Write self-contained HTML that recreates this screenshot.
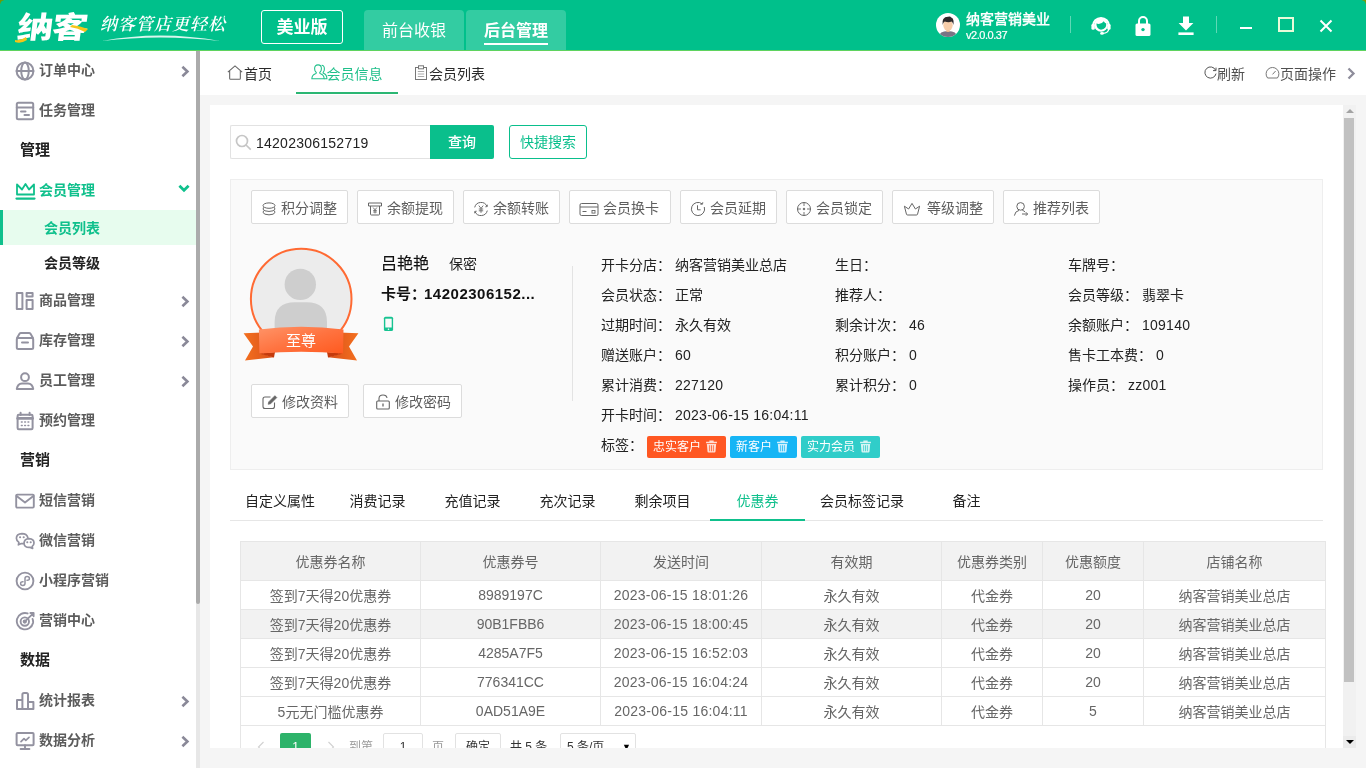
<!DOCTYPE html>
<html lang="zh-CN">
<head>
<meta charset="utf-8">
<title>纳客 会员信息</title>
<style>
*{box-sizing:border-box;margin:0;padding:0}
html,body{width:1366px;height:768px;overflow:hidden;background:#f0f0f0;font-family:"Liberation Sans","Noto Sans CJK SC",sans-serif;font-size:14px;color:#333}
.abs{position:absolute}
#hdr{position:absolute;left:0;top:0;width:1366px;height:50px;background:#00c08b}
#hdrline{position:absolute;left:0;top:50px;width:1366px;height:1px;background:#5fd35f}
#side{position:absolute;left:0;top:51px;width:196px;height:717px;background:#fff}
#sidesb{position:absolute;left:196px;top:51px;width:4px;height:717px;background:#e7e7e7}
#sidesb i{position:absolute;left:0;top:0;width:4px;height:553px;background:#ababab;border-radius:0 0 2px 2px}
#tabs{position:absolute;left:200px;top:51px;width:1166px;height:44px;background:#fff}
#mainbg{position:absolute;left:200px;top:95px;width:1166px;height:673px;background:#f5f5f5}
#panel{position:absolute;background:#fff;overflow:hidden}
#foot{position:absolute;left:200px;top:746px;width:1166px;height:22px;background:#f0f0f0}

/* header */
#logo{position:absolute;left:15px;top:8px;font:normal 900 30px/40px "Liberation Sans","Noto Sans CJK SC",sans-serif;color:#fff;letter-spacing:-1px;transform:skewX(-7deg) scaleX(1.2);transform-origin:left bottom;white-space:nowrap}
#slogan{position:absolute;left:100px;top:14px;font:italic 600 17px/22px "Liberation Serif","Noto Serif CJK SC",serif;color:#fff;letter-spacing:1px;white-space:nowrap}
#ver{position:absolute;left:261px;top:10px;width:82px;height:34px;border:1px solid #fff;border-radius:3px;color:#fff;font-weight:700;font-size:17px;line-height:33px;text-align:center}
.htab{position:absolute;top:10px;height:40px;background:#33cca2;border-radius:4px 4px 0 0;color:#fff;font-size:16px;line-height:42px;text-align:center}
#uname{position:absolute;left:966px;top:9px;color:#fff;font-size:14px;line-height:20px;font-weight:500;white-space:nowrap;-webkit-text-stroke:.25px #fff}
#uver{position:absolute;left:966px;top:28px;color:#fff;font-size:11px;line-height:14px;white-space:nowrap;letter-spacing:-0.45px;-webkit-text-stroke:.2px #fff}
.hsep{position:absolute;top:16px;width:1px;height:17px;background:#5fd8b6}

/* sidebar */
.mi{position:absolute;left:0;width:196px;height:40px}
.mi svg.ic{position:absolute;left:15px;top:11px}
.mi .t{position:absolute;left:39px;top:10px;font-size:14px;line-height:20px;font-weight:700;color:#5c5c5c;white-space:nowrap}
.mi svg.ch{position:absolute;left:179px;top:14px}
.mg{position:absolute;left:20px;font-size:15px;line-height:20px;font-weight:700;color:#222}
.sub{position:absolute;left:0;width:196px;height:35px}
.sub .t{position:absolute;left:44px;top:8px;font-size:14px;line-height:20px;font-weight:700;color:#222}
#sidein{position:absolute;left:0;width:196px}

/* top tabs */
.tt{position:absolute;top:0;height:44px;line-height:46px;font-size:14px;color:#2a2a2a;white-space:nowrap}
.tt svg{position:absolute;top:14px}

/* panel */
#panel{left:210px;top:105px;width:1146px;height:643px}
#vsb{position:absolute;left:1133px;top:0;width:13px;height:643px;background:#f1f1f1}
#vsb i{position:absolute;left:1px;top:13px;width:10px;height:564px;background:#c1c1c1}
#vsb .up{position:absolute;left:3px;top:4px;width:0;height:0;border:4px solid transparent;border-top:0;border-bottom:4px solid #a3a3a3}
#vsb .dn{position:absolute;left:3px;top:635px;width:0;height:0;border:4px solid transparent;border-bottom:0;border-top:4px solid #000}
#vsb .dnb{position:absolute;left:0;top:631px;width:13px;height:12px;background:#ebebeb}
#sinput{position:absolute;left:20px;top:20px;width:200px;height:34px;border:1px solid #e2e2e2;border-right:0;background:#fff;border-radius:2px 0 0 2px}
#sinput span{position:absolute;left:25px;top:6.500px;font-size:14px;line-height:20px;color:#222}
#sbtn{position:absolute;left:220px;top:20px;width:64px;height:34px;background:#0abf8c;color:#fff;font-size:14px;font-weight:500;line-height:35px;text-align:center;border-radius:0 2px 2px 0}
#qbtn{position:absolute;left:299px;top:20px;width:78px;height:34px;border:1px solid #0abf8c;color:#0abf8c;font-size:14px;line-height:33px;text-align:center;border-radius:3px;background:#fff}
#card{position:absolute;left:20px;top:74px;width:1093px;height:291px;background:#fafafa;border:1px solid #eee}
.ab{position:absolute;top:9px;height:34px;border:1px solid #dcdcdc;border-radius:2px;background:#fff;color:#5e5e5e;font-size:14px;line-height:34px;white-space:nowrap;padding-left:29px}
.ab svg{position:absolute;left:9px;top:9.5px}

/* card content (coordinates relative to #card, whose origin = page (231,181)) */
.lb{position:absolute;font-size:14px;line-height:20px;color:#222;white-space:nowrap}
.lb b{font-weight:400;margin-left:4px}
.eb{position:absolute;top:203px;height:34px;border:1px solid #dcdcdc;border-radius:2px;background:#fff;color:#5e5e5e;font-size:14px;line-height:35px;white-space:nowrap;padding-left:30px}
.eb svg{position:absolute;left:9px;top:8px}
.tag{position:absolute;top:255px;height:22px;border-radius:2px;color:#fff;font-size:12px;line-height:22px;padding-left:6px;white-space:nowrap}
.tag svg{position:absolute;top:5px}

/* lower tabs + table (coords relative to #panel origin (210,105)) */
#ltabs{position:absolute;left:20px;top:376px;width:1093px;height:40px;border-bottom:1px solid #e6e6e6}
#ltabs div{position:absolute;top:0;height:40px;line-height:40px;font-size:14px;color:#222;text-align:center;white-space:nowrap}
#ltabs div.on{color:#0fc08c;border-bottom:2px solid #0fc08c;height:40px}
#tbl{position:absolute;left:30px;top:436px;border-collapse:collapse;table-layout:fixed;width:1085px}
#tbl th,#tbl td{border:1px solid #e6e6e6;text-align:center;font-size:14px;font-weight:400;color:#666;padding:0;white-space:nowrap;overflow:hidden}
#tbl th{height:39px;background:#f2f2f2}
#tbl td{height:29px}
#tbl tr.hv td{background:#f2f2f2}
#pgwrap{position:absolute;left:30px;top:620px;width:1086px;height:40px;border-left:1px solid #e6e6e6;border-right:1px solid #e6e6e6}
.pg{position:absolute;top:8px;height:28px;line-height:28px;font-size:12px;color:#333;white-space:nowrap}
.n{letter-spacing:.25px}
#tbl td:nth-child(3){letter-spacing:.25px}
#hdr,#sidein,#tabs,#panel{will-change:transform}
</style>
</head>
<body>
<div id="hdr">
<div class="abs" style="left:0;top:0;width:4px;height:4px;background:radial-gradient(circle at 4px 4px,#00c08b 3.200px,#6f9a06 4px)"></div>
<div class="abs" style="left:1362px;top:0;width:4px;height:4px;background:radial-gradient(circle at 0 4px,#00c08b 3.200px,#7a9a08 4px)"></div>
<div id="logo">纳客</div>
<svg class="abs" style="left:14px;top:10px" width="80" height="36" viewBox="0 0 80 36"><path d="M1 30 q6 1 11 -3 l1 3 q-6 4 -12 2z" fill="#f5c518"/><path d="M56 17 q8 1 15 5 l3 -3 q-8 -3 -16 -4z" fill="#f5c518"/></svg>
<div id="slogan">纳客管店更轻松</div>
<svg class="abs" style="left:100px;top:33px" width="126" height="10" viewBox="0 0 126 10"><path d="M2 8 Q60 -3 120 8 Q60 1 2 8z" fill="#fff" opacity=".85"/></svg>
<div id="ver">美业版</div>
<div class="htab" style="left:364px;width:100px">前台收银</div>
<div class="htab" style="left:466px;width:100px;font-weight:700"><span style="display:inline-block;line-height:25px;border-bottom:2px solid #fff;vertical-align:middle;margin-top:-1px">后台管理</span></div>
<svg class="abs" style="left:936px;top:13px" width="24" height="24" viewBox="0 0 24 24"><defs><clipPath id="avc"><circle cx="12" cy="12" r="12"/></clipPath></defs><circle cx="12" cy="12" r="12" fill="#fff"/><g clip-path="url(#avc)"><path d="M3 24 q0 -6 9 -6 q9 0 9 6z" fill="#7a7485"/><rect x="10.400" y="15" width="3.200" height="4" fill="#eab892"/><ellipse cx="12" cy="12.200" rx="4.700" ry="5.600" fill="#f6cdaa"/><path d="M6.600 12 q-1.200 -8 5.400 -8.200 q2.400 -0.600 3.200 0.600 q3.200 1 2.200 7.600 q-0.600 -2.600 -1.800 -3.400 q-3.400 1.200 -6.800 -0.200 q-1.600 0.800 -2.200 3.600z" fill="#2f2a2b"/></g></svg>
<div id="uname">纳客营销美业</div>
<div id="uver">v2.0.0.37</div>
<div class="hsep" style="left:1070px"></div>
<svg class="abs" style="left:1089px;top:13px" width="24" height="24" viewBox="0 0 24 24"><circle cx="12" cy="12" r="6.800" fill="#fff"/><path d="M4 13 a8 8 0 0 1 16 0" fill="none" stroke="#fff" stroke-width="2.200"/><rect x="2.400" y="10.800" width="3.400" height="6" rx="1.500" fill="#fff"/><rect x="18.200" y="10.800" width="3.400" height="6" rx="1.500" fill="#fff"/><path d="M7.400 10.600 q4.600 1.400 7.400 -2.400 q1 2 2.400 2.400 q0.500 5.400 -5.200 6.100 q-4.600 -0.700 -4.600 -6.100z" fill="#00c08b"/><path d="M19.800 16 q-0.500 4 -6 4.400" fill="none" stroke="#fff" stroke-width="1.300"/><ellipse cx="13" cy="20.400" rx="1.900" ry="1.300" fill="#fff"/></svg>
<svg class="abs" style="left:1133.500px;top:14.500px" width="18" height="22" viewBox="0 0 18 22"><path d="M5 9 v-3 a4 4 0 0 1 8 0 v3" fill="none" stroke="#fff" stroke-width="2"/><rect x="1.5" y="8.5" width="15" height="12.5" rx="1.6" fill="#fff"/><circle cx="9" cy="14.6" r="1.7" fill="#00c08b"/></svg>
<svg class="abs" style="left:1176.500px;top:15.500px" width="18" height="20" viewBox="0 0 18 20"><path d="M6 0.5 h6 v6.5 h4.4 l-7.4 7.6 l-7.4 -7.6 h4.4z" fill="#fff"/><rect x="1.4" y="16.4" width="15.2" height="2.6" fill="#fff"/></svg>
<div class="hsep" style="left:1216px"></div>
<div class="abs" style="left:1240px;top:27px;width:12px;height:2px;background:#fff"></div>
<div class="abs" style="left:1278px;top:17px;width:16px;height:15px;border:2px solid #e9fbd9"></div>
<svg class="abs" style="left:1319px;top:19px" width="14" height="14" viewBox="0 0 14 14"><path d="M1.5 1.5 L12.5 12.5 M12.5 1.5 L1.5 12.5" stroke="#fff" stroke-width="2" fill="none"/></svg>
</div>
<div id="hdrline"></div>
<div id="side"></div>
<div id="sidein" style="top:0;height:768px;background:none">
<div class="mi" style="top:50px"><svg class="ic" width="20" height="20" viewBox="0 0 20 20" fill="none" stroke="#9392a0" stroke-width="2" stroke-linejoin="round" stroke-linecap="round"><circle cx="10" cy="10" r="8.4"/><ellipse cx="10" cy="10" rx="3.8" ry="8.4"/><path d="M1.6 10 H18.4"/></svg><span class="t">订单中心</span><svg class="ch" width="12" height="14" viewBox="0 0 12 14" fill="none" stroke="#8a8998" stroke-width="2.600"><path d="M3.400 2.800 L8.400 7.500 L3.400 12.200"/></svg></div>
<div class="mi" style="top:90px"><svg class="ic" width="20" height="20" viewBox="0 0 20 20" fill="none" stroke="#9392a0" stroke-width="2" stroke-linejoin="round" stroke-linecap="round"><rect x="1.8" y="1.8" width="16.4" height="16.4" rx="1.5"/><path d="M1.8 6.6 H18.2 M6 10.6 H10.5 M9.5 14 H14" /></svg><span class="t">任务管理</span></div>
<div class="mi" style="top:280px"><svg class="ic" width="20" height="20" viewBox="0 0 20 20" fill="none" stroke="#9392a0" stroke-width="2" stroke-linejoin="round" stroke-linecap="round"><rect x="1.8" y="2" width="5.6" height="16"/><rect x="11.6" y="2" width="6" height="3.6"/><rect x="11.6" y="9" width="6" height="9"/></svg><span class="t">商品管理</span><svg class="ch" width="12" height="14" viewBox="0 0 12 14" fill="none" stroke="#8a8998" stroke-width="2.600"><path d="M3.400 2.800 L8.400 7.500 L3.400 12.200"/></svg></div>
<div class="mi" style="top:320px"><svg class="ic" width="20" height="20" viewBox="0 0 20 20" fill="none" stroke="#9392a0" stroke-width="2" stroke-linejoin="round" stroke-linecap="round"><path d="M2 7 L4.5 2.8 Q5 2 6 2 H14 Q15 2 15.5 2.8 L18 7"/><rect x="1.8" y="7" width="16.4" height="11" rx="1.5"/><path d="M7 11.6 H13" stroke-width="2"/></svg><span class="t">库存管理</span><svg class="ch" width="12" height="14" viewBox="0 0 12 14" fill="none" stroke="#8a8998" stroke-width="2.600"><path d="M3.400 2.800 L8.400 7.500 L3.400 12.200"/></svg></div>
<div class="mi" style="top:360px"><svg class="ic" width="20" height="20" viewBox="0 0 20 20" fill="none" stroke="#9392a0" stroke-width="2" stroke-linejoin="round" stroke-linecap="round"><circle cx="10" cy="6.2" r="3.9"/><path d="M1.8 18 Q2.5 12.6 7 12.4 H13 Q17.5 12.6 18.2 18 Z"/></svg><span class="t">员工管理</span><svg class="ch" width="12" height="14" viewBox="0 0 12 14" fill="none" stroke="#8a8998" stroke-width="2.600"><path d="M3.400 2.800 L8.400 7.500 L3.400 12.200"/></svg></div>
<div class="mi" style="top:400px"><svg class="ic" width="20" height="20" viewBox="0 0 20 20" fill="none" stroke="#9392a0" stroke-width="2" stroke-linejoin="round" stroke-linecap="round"><rect x="2.6" y="3.8" width="15" height="14.4" rx="1.2"/><path d="M2.6 7.4 H17.6" stroke-width="2.6"/><path d="M5.6 1.8 V4 M14.6 1.8 V4" /><path d="M6.4 11 H7.2 M9.7 11 H10.5 M13 11 H13.8 M6.4 14.4 H7.2 M9.7 14.4 H10.5 M13 14.4 H13.8" stroke-width="1.5"/></svg><span class="t">预约管理</span></div>
<div class="mi" style="top:480px"><svg class="ic" width="20" height="20" viewBox="0 0 20 20" fill="none" stroke="#9392a0" stroke-width="1.9" stroke-linejoin="round" stroke-linecap="round"><rect x="1.2" y="3.6" width="17.6" height="13" rx="1"/><path d="M1.6 5 L10 11.4 L18.4 5"/></svg><span class="t">短信营销</span></div>
<div class="mi" style="top:520px"><svg class="ic" width="20" height="20" viewBox="0 0 20 20" fill="none" stroke="#9392a0" stroke-width="1.7" stroke-linejoin="round" stroke-linecap="round"><path d="M8.8 12.6 Q7.6 12.8 6.4 12.5 L3.4 13.8 L3.9 11.4 Q1.4 9.6 1.4 7.2 Q1.4 3 7 2.6 Q11.6 2.6 12.8 6.4"/><path d="M14 7.6 Q19 7.8 19 12 Q19 14 17.2 15.4 L17.6 17.4 L15.2 16.4 Q9.4 17 9 12.2 Q9.2 7.8 14 7.6 Z"/><path d="M5 6.2 H5.2 M8.6 6.2 H8.8 M12.2 11.2 H12.4 M15.6 11.2 H15.8" stroke-width="1.9"/></svg><span class="t">微信营销</span></div>
<div class="mi" style="top:560px"><svg class="ic" width="20" height="20" viewBox="0 0 20 20" fill="none" stroke="#9392a0" stroke-width="1.9" stroke-linejoin="round" stroke-linecap="round"><circle cx="10" cy="10" r="8.4"/><path d="M10 7.400 V12.600 Q10 14.400 7.900 14.400 Q5.600 14.400 5.600 12.400 Q5.600 10.600 8 10.800 M10 7.400 Q10 5.600 12.100 5.600 Q14.400 5.600 14.400 7.600 Q14.400 9.400 12 9.200" stroke-width="1.5"/></svg><span class="t">小程序营销</span></div>
<div class="mi" style="top:600px"><svg class="ic" width="20" height="20" viewBox="0 0 20 20" fill="none" stroke="#9392a0" stroke-width="1.9" stroke-linejoin="round" stroke-linecap="round"><path d="M17.6 8 Q18.4 10 18 12 A8.2 8.2 0 1 1 12.6 2.4"/><circle cx="9.8" cy="10.6" r="4.2"/><circle cx="9.8" cy="10.6" r="1.2" fill="#8e8d9b"/><path d="M10 10.4 L18 2.6 M15.4 2 L18.6 2 L18.6 5.2" stroke-width="1.9"/></svg><span class="t">营销中心</span></div>
<div class="mi" style="top:680px"><svg class="ic" width="20" height="20" viewBox="0 0 20 20" fill="none" stroke="#9392a0" stroke-width="2" stroke-linejoin="round" stroke-linecap="round"><path d="M2 18 V9 H7.400 V3.600 Q7.400 2 9 2 H11.400 Q13 2 13 3.600 V11 H18.400 V18 Z M7.400 9 V18 M13 11 V18"/></svg><span class="t">统计报表</span><svg class="ch" width="12" height="14" viewBox="0 0 12 14" fill="none" stroke="#8a8998" stroke-width="2.600"><path d="M3.400 2.800 L8.400 7.500 L3.400 12.200"/></svg></div>
<div class="mi" style="top:720px"><svg class="ic" width="20" height="20" viewBox="0 0 20 20" fill="none" stroke="#9392a0" stroke-width="2" stroke-linejoin="round" stroke-linecap="round"><rect x="1.6" y="2" width="17" height="12.2" rx="1"/><path d="M10 14.2 V18 M5.6 18 H14.4" stroke-width="1.9"/><path d="M6 10.6 L9 7.6 L10.8 9.4 L14 6.4" stroke-width="1.7"/></svg><span class="t">数据分析</span><svg class="ch" width="12" height="14" viewBox="0 0 12 14" fill="none" stroke="#8a8998" stroke-width="2.600"><path d="M3.400 2.800 L8.400 7.500 L3.400 12.200"/></svg></div>
<div class="mi" style="top:170px"><svg class="ic" width="21" height="20" viewBox="0 0 21 20" fill="none" stroke="#0fc08c" stroke-width="1.8" stroke-linejoin="round" stroke-linecap="round"><path d="M2 13.5 V3.5 L7 8.5 L10.5 3 L14 8.5 L19 3.5 V13.5 Z"/><path d="M1.5 17.6 H19.5" stroke-width="2.2"/></svg><span class="t" style="color:#0fc08c">会员管理</span><svg class="ch" style="top:12px;left:177px" width="14" height="12" viewBox="0 0 14 12" fill="none" stroke="#0fc08c" stroke-width="2.800"><path d="M2.400 3.800 L7 8.200 L11.600 3.800"/></svg></div>
<div class="sub" style="top:210px;background:#e7fcee;border-left:3px solid #0fc08c"><span class="t" style="left:41px;color:#0fc08c">会员列表</span></div>
<div class="sub" style="top:245px"><span class="t">会员等级</span></div>
<div class="mg" style="top:140px">管理</div>
<div class="mg" style="top:450px">营销</div>
<div class="mg" style="top:650px">数据</div>
</div>
<div id="sidesb"><i></i></div>
<div id="tabs">
<div class="tt" style="left:27px"><svg style="left:0" width="16" height="15" viewBox="0 0 15 15" preserveAspectRatio="none" fill="none" stroke="#666" stroke-width="1"><path d="M0.8 7.2 L7.5 0.9 L14.2 7.2 M2.5 5.8 V13.5 Q2.5 14.3 3.3 14.3 H11.7 Q12.5 14.3 12.5 13.5 V5.8"/></svg><span style="margin-left:17px">首页</span></div>
<div class="tt" style="left:110.500px;color:#1fbf8a"><svg style="left:0;top:13px" width="17" height="16" viewBox="0 0 16 15" fill="none" stroke="#1fbf8a" stroke-width="1"><path d="M6.6 0.8 Q9.8 0.8 9.8 4.4 Q9.8 6.8 8.2 8 Q8 8.8 9 9.2 Q12.2 10.2 12.4 13.8 H0.8 Q1 10.2 4.2 9.2 Q5.2 8.8 5 8 Q3.4 6.8 3.4 4.4 Q3.4 0.8 6.6 0.8Z"/><path d="M10 1.2 Q12.6 1.4 12.6 4.6 Q12.6 6.8 11.4 7.8 Q11.2 8.6 12.2 9 Q14.8 10 15 13.8 H12.4"/></svg><span style="margin-left:16px">会员信息</span></div>
<div class="abs" style="left:96px;top:41px;width:102px;height:2px;background:#2bb673"></div>
<div class="tt" style="left:214px"><svg style="left:0" width="14" height="15" viewBox="0 0 14 15" fill="none" stroke="#777" stroke-width="1"><rect x="1.5" y="2.5" width="11" height="12"/><rect x="4.5" y="0.8" width="5" height="3" fill="#fff"/><path d="M3.800 6.500 H10.200 M3.800 9 H10.200 M3.800 11.500 H10.200" stroke="#aaa"/></svg><span style="margin-left:15px">会员列表</span></div>
<div class="tt" style="left:1004px;color:#505050"><svg style="left:0;top:15px" width="13" height="13" viewBox="0 0 13 13" fill="none" stroke="#555" stroke-width="1"><path d="M11.6 4.2 A5.6 5.6 0 1 0 12 7.6"/><path d="M12 1.6 V4.6 H9" /></svg><span style="margin-left:13px">刷新</span></div>
<div class="tt" style="left:1065px;color:#505050"><svg style="left:0;top:15px" width="15" height="13" viewBox="0 0 15 13" fill="none" stroke="#777" stroke-width="1"><path d="M2.6 12 A6.4 6.4 0 1 1 12.4 12 Z"/><path d="M7.5 8.4 L10.6 5" /></svg><span style="margin-left:15px">页面操作</span></div>
<svg class="abs" style="left:1146px;top:16px" width="10" height="13" viewBox="0 0 10 13" fill="none" stroke="#8e8d9b" stroke-width="2.3"><path d="M2.500 1.500 L7.500 6.500 L2.500 11.500"/></svg>
</div>
<div id="mainbg"></div>
<div id="panel">
<div id="sinput"><svg class="abs" style="left:4px;top:8px" width="17" height="17" viewBox="0 0 17 17" fill="none" stroke="#c6c6c6" stroke-width="1.700"><circle cx="7" cy="7" r="5.500"/><path d="M11 11 L15.800 15.600"/></svg><span class="n">14202306152719</span></div>
<div id="sbtn">查询</div>
<div id="qbtn">快捷搜索</div>
<div id="card"><div style="position:absolute;left:0;top:1px">
<div class="ab" style="left:20px;width:97px;"><svg width="16" height="16" viewBox="0 0 16 16" fill="none" stroke="#666" stroke-width="1"><ellipse cx="8" cy="4.600" rx="6" ry="2.700"/><path d="M2.500 6.300 Q1 8.600 4 9.800 Q8 11.100 12 9.800 Q15 8.600 13.500 6.300 M2.500 9.700 Q1 12 4 13.200 Q8 14.500 12 13.200 Q15 12 13.500 9.700"/></svg>积分调整</div>
<div class="ab" style="left:126px;width:97px;"><svg width="16" height="16" viewBox="0 0 16 16" fill="none" stroke="#666" stroke-width="1"><path d="M1.5 2 H14.5 V5 H1.5 Z M3.5 5 V13.2 Q3.5 14 4.3 14 H11.7 Q12.5 14 12.5 13.2 V5"/><path d="M6.2 6.6 L8 8.8 L9.8 6.6 M8 8.8 V12.4 M6.2 9.4 H9.8 M6.2 11 H9.8" stroke-width=".9"/></svg>余额提现</div>
<div class="ab" style="left:232px;width:97px;"><svg width="16" height="16" viewBox="0 0 16 16" fill="none" stroke="#666" stroke-width="1"><path d="M1.700 6.400 A6.500 6.500 0 0 1 14 5.400 M14.300 9.600 A6.500 6.500 0 0 1 2 10.600"/><path d="M5.8 4.6 L8 7.4 L10.2 4.6 M8 7.4 V11.8 M5.8 8 H10.2 M5.8 9.8 H10.2" stroke-width=".9"/><path d="M12.300 5.800 L14.200 5.600 L14.400 3.700 M3.700 10.200 L1.800 10.400 L1.600 12.300" stroke-width=".9"/></svg>余额转账</div>
<div class="ab" style="left:338px;width:102px;padding-left:33px"><svg width="20" height="16" viewBox="0 0 20 16" fill="none" stroke="#666" stroke-width="1"><rect x="1" y="2.5" width="18" height="12" rx="1.5"/><path d="M1 6 H19 M3.5 10.5 H7.5"/><rect x="13" y="9.5" width="3" height="2.6" stroke-width=".9"/></svg>会员换卡</div>
<div class="ab" style="left:449px;width:97px;"><svg width="16" height="16" viewBox="0 0 16 16" fill="none" stroke="#666" stroke-width="1"><path d="M14.300 6 A6.600 6.600 0 1 1 12.200 2.900"/><path d="M10.400 3.300 L12.500 3.200 L12.800 1.200" stroke-width=".9"/><path d="M7.500 4.300 V8.800 H10.600"/></svg>会员延期</div>
<div class="ab" style="left:555px;width:97px;"><svg width="16" height="16" viewBox="0 0 16 16" fill="none" stroke="#666" stroke-width="1"><circle cx="8" cy="8" r="6.5"/><path d="M8 1.5 V5 M8 11 V14.5 M1.5 8 H5 M11 8 H14.5" stroke-width=".9"/><circle cx="8" cy="8" r=".8" fill="#666"/></svg>会员锁定</div>
<div class="ab" style="left:661px;width:102px;padding-left:34px"><svg width="20" height="16" viewBox="0 0 20 16" fill="none" stroke="#666" stroke-width="1"><path d="M2.4 5.2 L6.6 8 L10 2.4 L13.4 8 L17.6 5.2 L15.6 13 Q15.4 14 14.4 14 H5.6 Q4.6 14 4.4 13 Z"/></svg>等级调整</div>
<div class="ab" style="left:772px;width:97px;"><svg width="16" height="16" viewBox="0 0 16 16" fill="none" stroke="#666" stroke-width="1"><circle cx="7.6" cy="5.4" r="3.8"/><path d="M1.4 14.6 Q2 10.2 6 9.4 M9.4 9.4 Q11 9.8 12 10.8 M9 13 H14.6 M12.8 11.2 L14.6 13 L12.8 14.8"/></svg>推荐列表</div>

<svg class="abs" style="left:12px;top:65px" width="116" height="116" viewBox="0 0 116 116">
<defs><clipPath id="avb"><circle cx="58" cy="53" r="49"/></clipPath>
<linearGradient id="rbg" x1="0" y1="0" x2="1" y2="1"><stop offset="0" stop-color="#ff9468"/><stop offset=".5" stop-color="#ff7340"/><stop offset="1" stop-color="#ff5a1f"/></linearGradient>
<linearGradient id="tl" x1="0" y1="0" x2="1" y2="0"><stop offset="0" stop-color="#f4701f"/><stop offset="1" stop-color="#d9501a"/></linearGradient>
<linearGradient id="tr" x1="1" y1="0" x2="0" y2="0"><stop offset="0" stop-color="#f4701f"/><stop offset="1" stop-color="#d9501a"/></linearGradient></defs>
<circle cx="58.200" cy="53" r="50.300" fill="#ececec" stroke="#ff6a33" stroke-width="2"/>
<g clip-path="url(#avb)"><circle cx="57.300" cy="38.400" r="15.700" fill="#cecece"/><path d="M31.600 100 V76 Q31.600 56.200 52 56.200 H63.600 Q84 56.200 84 76 V100 Z" fill="#cecece"/></g>
<path d="M0.600 87.200 L20 86.600 L20 108 L31 111.200 L2 114.400 L10 100.600 Z" fill="url(#tl)"/>
<path d="M115.400 87.200 L96 86.600 L96 108 L85 111.200 L114 114.400 L106 100.600 Z" fill="url(#tr)"/>
<path d="M16 107.400 L32 106 L31 111.400 Z" fill="#c43a0c"/><path d="M100 107.400 L84 106 L85 111.400 Z" fill="#c43a0c"/>
<path d="M15.900 83.400 Q58 78.200 100.500 83.400 L100 107.600 Q58 103.800 16.400 107.600 Z" fill="url(#rbg)"/>
<text x="58" y="99.500" text-anchor="middle" font-size="15" fill="#fff" font-family="Liberation Sans, Noto Sans CJK SC, sans-serif">至尊</text>
</svg>
<div class="abs" style="left:150px;top:71px;font-size:16px;line-height:24px;color:#111;font-weight:400;white-space:nowrap"><span style="-webkit-text-stroke:.15px #111">吕艳艳</span><span style="font-size:14px;font-weight:400;color:#222;margin-left:20px">保密</span></div>
<div class="abs" style="left:150px;top:102px;font-size:15px;line-height:22px;color:#111;font-weight:700;white-space:nowrap">卡号：<span style="margin-left:-2px;letter-spacing:.5px">14202306152...</span></div>
<svg class="abs" style="left:151px;top:134px" width="12" height="16" viewBox="0 0 12 16"><rect x="1.900" y="1.700" width="9.200" height="14.300" rx="1.600" fill="#17c391"/><rect x="3.300" y="3.700" width="6.400" height="8.800" fill="#fafafa"/><circle cx="6.500" cy="14.200" r=".8" fill="#fafafa"/></svg>
<div class="eb" style="left:20px;width:98px"><svg width="18" height="18" viewBox="0 0 18 18" fill="none" stroke="#666" stroke-width="1.1"><path d="M13.500 9.500 V13.500 Q13.500 15.500 11.500 15.500 H4 Q2 15.500 2 13.500 V6 Q2 4 4 4 H9.500"/><path d="M7.200 11.300 L7.700 8.900 L13.900 2.700 L15.800 4.600 L9.600 10.800 Z" fill="#666" stroke-width=".7"/></svg>修改资料</div>
<div class="eb" style="left:132px;width:99px;padding-left:31px"><svg style="left:11px" width="16" height="18" viewBox="0 0 16 18" fill="none" stroke="#666" stroke-width="1.1"><path d="M4 8 V5.500 Q4 2 8 2 Q11.600 2 12 5"/><rect x="1.700" y="8" width="12.600" height="8" rx="1"/><path d="M8 10.600 V13.400" stroke-width="1.300"/></svg>修改密码</div>
<div class="abs" style="left:341px;top:85px;width:1px;height:135px;background:#e3e3e3"></div>
<div class="lb" style="left:370px;top:74px">开卡分店：<b>纳客营销美业总店</b></div>
<div class="lb" style="left:370px;top:104px">会员状态：<b>正常</b></div>
<div class="lb" style="left:370px;top:134px">过期时间：<b>永久有效</b></div>
<div class="lb" style="left:370px;top:164px">赠送账户：<b class="n">60</b></div>
<div class="lb" style="left:370px;top:194px">累计消费：<b class="n">227120</b></div>
<div class="lb" style="left:370px;top:224px">开卡时间：<b class="n">2023-06-15 16:04:11</b></div>
<div class="lb" style="left:370px;top:254px">标签：</div>
<div class="lb" style="left:604px;top:74px">生日：</div>
<div class="lb" style="left:604px;top:104px">推荐人：</div>
<div class="lb" style="left:604px;top:134px">剩余计次：<b class="n">46</b></div>
<div class="lb" style="left:604px;top:164px">积分账户：<b class="n">0</b></div>
<div class="lb" style="left:604px;top:194px">累计积分：<b class="n">0</b></div>
<div class="lb" style="left:837px;top:74px">车牌号：</div>
<div class="lb" style="left:837px;top:104px">会员等级：<b>翡翠卡</b></div>
<div class="lb" style="left:837px;top:134px">余额账户：<b class="n">109140</b></div>
<div class="lb" style="left:837px;top:164px">售卡工本费：<b class="n">0</b></div>
<div class="lb" style="left:837px;top:194px">操作员：<b class="n">zz001</b></div>
<div class="tag" style="left:416px;width:79px;background:#ff5722">忠实客户<svg style="left:58px;top:4px" width="13" height="13" viewBox="0 0 12 12" fill="#fff" opacity=".8"><path d="M4 0.400 H8 V1.500 H11 V2.900 H1 V1.500 H4 Z"/><path d="M1.700 3.600 H10.300 L9.700 10.700 Q9.600 11.600 8.700 11.600 H3.300 Q2.400 11.600 2.300 10.700 Z M4 4.800 V10.300 H4.700 V4.800 Z M5.650 4.800 V10.300 H6.350 V4.800 Z M7.300 4.800 V10.300 H8 V4.800 Z" fill-rule="evenodd"/></svg></div>
<div class="tag" style="left:499px;width:67px;background:#16b5f5">新客户<svg style="left:46px;top:4px" width="13" height="13" viewBox="0 0 12 12" fill="#fff" opacity=".8"><path d="M4 0.400 H8 V1.500 H11 V2.900 H1 V1.500 H4 Z"/><path d="M1.700 3.600 H10.300 L9.700 10.700 Q9.600 11.600 8.700 11.600 H3.300 Q2.400 11.600 2.300 10.700 Z M4 4.800 V10.300 H4.700 V4.800 Z M5.650 4.800 V10.300 H6.350 V4.800 Z M7.300 4.800 V10.300 H8 V4.800 Z" fill-rule="evenodd"/></svg></div>
<div class="tag" style="left:570px;width:79px;background:#30cdc9">实力会员<svg style="left:58px;top:4px" width="13" height="13" viewBox="0 0 12 12" fill="#fff" opacity=".8"><path d="M4 0.400 H8 V1.500 H11 V2.900 H1 V1.500 H4 Z"/><path d="M1.700 3.600 H10.300 L9.700 10.700 Q9.600 11.600 8.700 11.600 H3.300 Q2.400 11.600 2.300 10.700 Z M4 4.800 V10.300 H4.700 V4.800 Z M5.650 4.800 V10.300 H6.350 V4.800 Z M7.300 4.800 V10.300 H8 V4.800 Z" fill-rule="evenodd"/></svg></div>

</div></div>
<div id="ltabs"><div style="left:0px;width:100px">自定义属性</div><div style="left:100px;width:95px">消费记录</div><div style="left:195px;width:95px">充值记录</div><div style="left:290px;width:95px">充次记录</div><div style="left:385px;width:95px">剩余项目</div><div style="left:480px;width:95px" class=on>优惠券</div><div style="left:575px;width:114px">会员标签记录</div><div style="left:689px;width:95px">备注</div></div>
<table id="tbl"><colgroup><col style="width:180px"><col style="width:180px"><col style="width:161px"><col style="width:180px"><col style="width:101px"><col style="width:101px"><col style="width:182px"></colgroup>
<tr><th>优惠券名称</th><th>优惠券号</th><th>发送时间</th><th>有效期</th><th>优惠券类别</th><th>优惠额度</th><th>店铺名称</th></tr>
<tr><td>签到7天得20优惠券</td><td>8989197C</td><td>2023-06-15 18:01:26</td><td>永久有效</td><td>代金券</td><td>20</td><td>纳客营销美业总店</td></tr>
<tr class=hv><td>签到7天得20优惠券</td><td>90B1FBB6</td><td>2023-06-15 18:00:45</td><td>永久有效</td><td>代金券</td><td>20</td><td>纳客营销美业总店</td></tr>
<tr><td>签到7天得20优惠券</td><td>4285A7F5</td><td>2023-06-15 16:52:03</td><td>永久有效</td><td>代金券</td><td>20</td><td>纳客营销美业总店</td></tr>
<tr><td>签到7天得20优惠券</td><td>776341CC</td><td>2023-06-15 16:04:24</td><td>永久有效</td><td>代金券</td><td>20</td><td>纳客营销美业总店</td></tr>
<tr><td>5元无门槛优惠券</td><td>0AD51A9E</td><td>2023-06-15 16:04:11</td><td>永久有效</td><td>代金券</td><td>5</td><td>纳客营销美业总店</td></tr>
</table>
<div id="pgwrap">
<svg class="abs" style="left:16px;top:16px" width="8" height="12" viewBox="0 0 8 12" fill="none" stroke="#d2d2d2" stroke-width="1.2"><path d="M6.500 1 L1.500 6 L6.500 11"/></svg>
<div class="pg" style="left:39px;width:31px;background:#2db36a;color:#fff;text-align:center;border-radius:2px">1</div>
<svg class="abs" style="left:86px;top:16px" width="8" height="12" viewBox="0 0 8 12" fill="none" stroke="#d2d2d2" stroke-width="1.2"><path d="M1.500 1 L6.500 6 L1.500 11"/></svg>
<div class="pg" style="left:108px;color:#999">到第</div>
<div class="pg" style="left:142px;width:40px;border:1px solid #e2e2e2;border-radius:2px;text-align:center;line-height:26px;background:#fff">1</div>
<div class="pg" style="left:191px;color:#999">页</div>
<div class="pg" style="left:214px;width:46px;border:1px solid #e2e2e2;border-radius:2px;text-align:center;line-height:26px;background:#fff">确定</div>
<div class="pg" style="left:269px">共 5 条</div>
<div class="pg" style="left:319px;width:76px;border:1px solid #e2e2e2;border-radius:2px;line-height:26px;padding-left:6px;background:#fff">5 条/页<span style="position:absolute;left:61px;top:0;font-size:9px;color:#000">▼</span></div>
</div>

<div id="vsb"><div class="up"></div><i></i><div class="dnb"></div><div class="dn"></div></div>
</div>
</body>
</html>
